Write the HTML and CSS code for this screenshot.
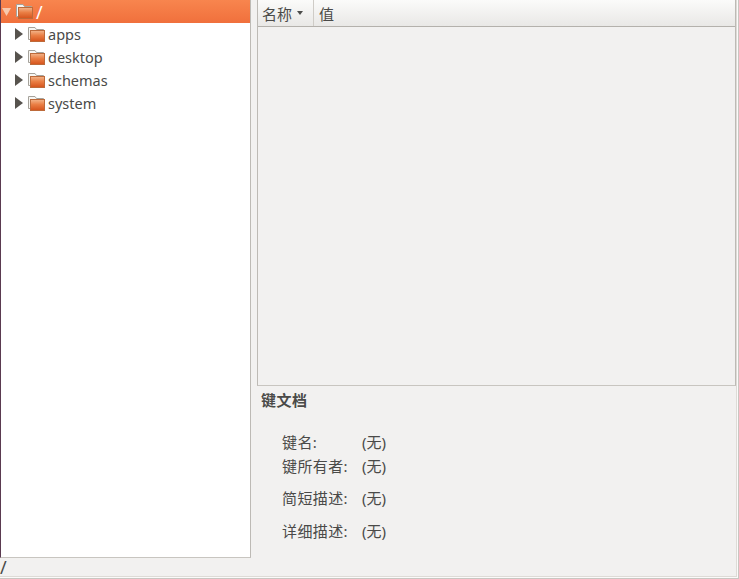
FILE: index.html
```html
<!DOCTYPE html>
<html lang="zh-CN">
<head>
    <meta charset="UTF-8">
    <meta name="viewport" content="width=device-width, initial-scale=1.0">
    <title>配置编辑器</title>
    <link rel="stylesheet" href="styles.css">
</head>
<body>
    <svg class="defs" width="0" height="0">
        <defs>
            <linearGradient id="folder-front" x1="0" y1="0" x2="0" y2="1">
                <stop offset="0" stop-color="#f3b68c"/>
                <stop offset="0.45" stop-color="#ea7f45"/>
                <stop offset="1" stop-color="#d4521b"/>
            </linearGradient>
            <symbol id="folder" viewBox="0 0 17 15">
                <path d="M0.500 12.500V0.500h6.500l1.500 2h7v10z" fill="#f7f6f3" stroke="#a5a29b"/>
                <rect x="2.500" y="3.500" width="14" height="11" fill="url(#folder-front)" stroke="#bd6a3a"/>
            </symbol>
        </defs>
    </svg>

    <div class="window">
        <div class="frame">
            <div class="panes">
                <div class="tree">
                    <div class="tree-row selected">
                        <svg class="arrow" width="9" height="8" viewBox="0 0 9 8"><path d="M0 0h9L4.500 8z" fill="#f8c8ac"/></svg>
                        <svg class="folder" width="17" height="15"><use href="#folder"/></svg>
                        <span>/</span>
                    </div>
                    <div class="tree-row child">
                        <svg class="arrow" width="8" height="12" viewBox="0 0 8 12"><path d="M0 0l8 6-8 6z" fill="#57534e"/></svg>
                        <svg class="folder" width="17" height="15"><use href="#folder"/></svg>
                        <span>apps</span>
                    </div>
                    <div class="tree-row child">
                        <svg class="arrow" width="8" height="12" viewBox="0 0 8 12"><path d="M0 0l8 6-8 6z" fill="#57534e"/></svg>
                        <svg class="folder" width="17" height="15"><use href="#folder"/></svg>
                        <span>desktop</span>
                    </div>
                    <div class="tree-row child">
                        <svg class="arrow" width="8" height="12" viewBox="0 0 8 12"><path d="M0 0l8 6-8 6z" fill="#57534e"/></svg>
                        <svg class="folder" width="17" height="15"><use href="#folder"/></svg>
                        <span>schemas</span>
                    </div>
                    <div class="tree-row child">
                        <svg class="arrow" width="8" height="12" viewBox="0 0 8 12"><path d="M0 0l8 6-8 6z" fill="#57534e"/></svg>
                        <svg class="folder" width="17" height="15"><use href="#folder"/></svg>
                        <span>system</span>
                    </div>
                </div>

                <div class="right">
                    <div class="key-list">
                        <div class="list-header">
                            <div class="col col-name">名称<span class="sort"></span></div>
                            <div class="col col-value">值</div>
                        </div>
                    </div>

                    <div class="doc">
                        <h2>键文档</h2>
                        <div class="doc-rows">
                            <div class="doc-row row-name"><span class="doc-label">键名:</span><span>(无)</span></div>
                            <div class="doc-row row-owner"><span class="doc-label">键所有者:</span><span>(无)</span></div>
                            <div class="doc-row row-short"><span class="doc-label">简短描述:</span><span>(无)</span></div>
                            <div class="doc-row row-long"><span class="doc-label">详细描述:</span><span>(无)</span></div>
                        </div>
                    </div>
                </div>
            </div>

            <div class="statusbar">/</div>
        </div>
    </div>
</body>
</html>
```

FILE: styles.css
```css
body {
    margin: 0;
    background: #f2f1f0;
    color: #4a4a48;
    font-family: "Noto Sans", "Noto Sans CJK SC", sans-serif;
    font-size: 15px;
}

.defs {
    display: block;
    height: 0;
}

.window {
    box-sizing: border-box;
    width: 739px;
    height: 579px;
    padding: 0 1px 1px 0;
    background: #fbfafa;
    border-right: 1px solid #c9c6c1;
    border-bottom: 1px solid #c9c6c1;
    overflow: hidden;
}

.frame {
    display: flex;
    flex-direction: column;
    height: 100%;
    box-sizing: border-box;
    background: #f2f1f0;
    border-right: 1px solid #dedbd6;
    border-bottom: 1px solid #dedbd6;
}

.panes {
    display: flex;
    height: 558px;
    flex: none;
}

.tree {
    width: 249px;
    height: 557px;
    background: #fff;
    border-left: 1px solid #5a3a50;
    border-right: 1px solid #bdbab5;
    border-bottom: 1px solid #c8c5c0;
    flex: none;
}

.tree-row {
    display: flex;
    align-items: center;
    box-sizing: border-box;
    height: 23px;
    font-size: 14.5px;
}

.tree-row.selected {
    background: linear-gradient(#f8854e, #f0703c);
    color: #fff;
    padding-left: 1px;
}

.tree-row.selected .folder {
    margin-left: 5px;
}

.tree-row.selected span {
    margin-left: 3px;
    font-size: 18px;
    line-height: 18px;
}

.tree-row.child {
    padding: 0 0 1px 14px;
}

.tree-row.child .folder {
    margin-left: 5px;
}

.tree-row.child span {
    margin-left: 3px;
    margin-bottom: 1px;
}

.right {
    flex: 1;
    margin-left: 6px;
    min-width: 0;
}

.key-list {
    height: 386px;
    box-sizing: border-box;
    border: 1px solid #bdbab5;
    border-top: 0;
    border-bottom-color: #c8c5c0;
}

.list-header {
    display: flex;
    height: 27px;
    box-sizing: border-box;
    background: linear-gradient(#fbfbfa, #e9e8e6);
    border-bottom: 1px solid #b4b1ac;
}

.col {
    display: flex;
    align-items: center;
    padding-left: 4px;
}

.col-name {
    width: 51px;
    border-right: 1px solid #cfccc7;
}

.col-value {
    padding-left: 5px;
}

.sort {
    width: 0;
    height: 0;
    margin-left: 5px;
    border-left: 3px solid transparent;
    border-right: 3px solid transparent;
    border-top: 4px solid #4c4c4a;
}

.doc {
    padding: 4px 0 0 4px;
}

.doc h2 {
    margin: 0;
    font-size: 15px;
    line-height: 20px;
    font-weight: 700;
    letter-spacing: 0.5px;
}

.doc-rows {
    padding: 20px 0 0 21px;
}

.doc-row {
    display: flex;
    height: 24px;
    line-height: 24px;
}

.row-short {
    margin-top: 8px;
}

.row-long {
    margin-top: 9px;
}

.doc-label {
    width: 80px;
    letter-spacing: 0.4px;
}

.statusbar {
    flex: 1;
    line-height: 18px;
    font-size: 18px;
}
```
